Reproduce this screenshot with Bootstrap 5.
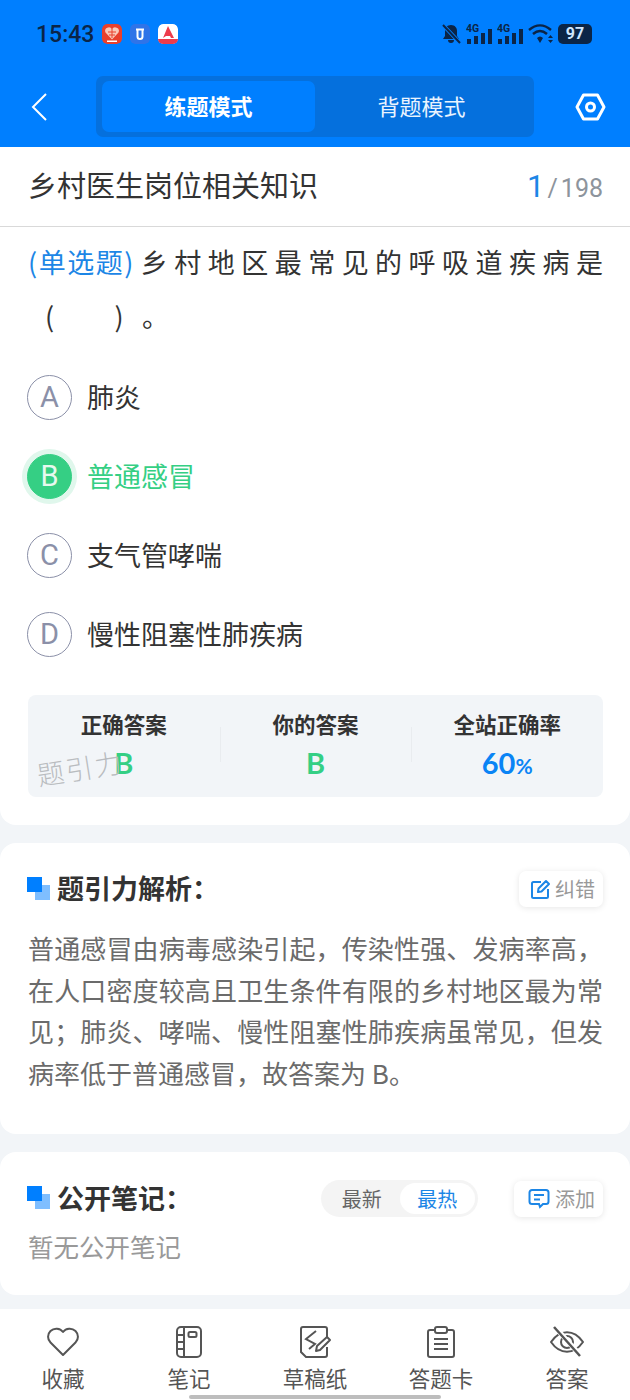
<!DOCTYPE html>
<html lang="zh-CN">
<head>
  <meta charset="UTF-8" />
  <meta name="viewport" content="width=device-width, initial-scale=1.0"/>
  <title>练题模式</title>
  <link href="https://cdn.jsdelivr.net/npm/bootstrap@5.3.3/dist/css/bootstrap.min.css" rel="stylesheet"/>
  <style>
    html, body { height: 1400px; overflow: hidden; }
    body {
      background-color: #f2f5f8;
      font-family: "Noto Sans CJK SC", "Noto Sans", sans-serif;
      color: #333;
    }
    .top-head { background-color: #007fff; height: 147px; }
    .status-row { height: 68px; padding: 0 36px; color: #0b2547; }
    .status-time { font: 500 23px/1 Roboto, sans-serif; }
    .app-ico { width: 20px; height: 20px; border-radius: 5px; display: block; }
    .batt-box { width: 34px; height: 20px; background: #0b2547; color: #cfe6ff; border-radius: 5px; font: 700 16px/1 Roboto, sans-serif; margin-right: 2px; }
    .nav-row { height: 79px; padding: 8px 24px 10px 30px; }
    .mode-switch { width: 438px; height: 61px; margin-left: 48px; margin-right: 41px; padding: 5px 6px; background-color: #0570dd; border-radius: 7px; }
    .mode-tab { flex: 1; color: #eaf4ff; font-size: 22px; border-radius: 7px; padding-bottom: 2px; }
    .mode-on { background-color: #007fff; color: #fff; font-weight: 700; }
    .title-row { height: 80px; background: #fff; border-bottom: 1px solid #d9d9d9; padding: 0 27px 0 28px; }
    .title-text { font-size: 29px; margin-bottom: 3px; }
    .page-now { font: 400 31px/1 Roboto, sans-serif; color: #1c86e6; }
    .page-all { font: 400 25px/1 Roboto, sans-serif; color: #8d949c; }
    .page-sep { margin: 0 3px; }
    .main-sheet { background: #fff; border-radius: 0 0 16px 16px; height: 598px; padding: 8px 27px 0 28px; position: relative; }
    .ques-line { font-size: 27px; line-height: 54px; gap: 6px; }
    .ques-tag { color: #1c86e6; letter-spacing: 1.500px; white-space: nowrap; }
    .ques-rest { flex: 1; text-align: justify; text-align-last: justify; }
    .ques-text2 { font-size: 27px; line-height: 54px; margin: 0; padding-left: 17px; white-space: pre; }
    .opt-list { margin-top: 32px; gap: 34px; }
    .opt-item { height: 45px; gap: 15px; font-size: 27px; margin-left: -1px; }
    .opt-mark { width: 45px; height: 45px; border-radius: 50%; border: 1px solid #8b90a8; color: #8b90a8; font: 400 29px/1 Roboto, sans-serif; }
    .opt-right { color: #35cf84; }
    .opt-right .opt-mark { background: #35cf84; border-color: #35cf84; color: #e6f9ef; box-shadow: 0 0 0 5px #e0f7ec; }
    .stat-box { margin-top: 38px; height: 102px; background: #f2f5f8; border-radius: 8px; padding-top: 15px; }
    .stat-col { flex: 1; text-align: center; position: relative; }
    .stat-col + .stat-col::before { content: ""; position: absolute; left: 0; top: 17px; height: 35px; border-left: 1px solid #e9ecef; }
    .stat-name { font-size: 21.500px; font-weight: 700; line-height: 28px; }
    .stat-val { font: 700 29px/38px Lato, sans-serif; margin-top: 6px; }
    .stat-pct { font-size: 21px; }
    .val-green { color: #35cf84; }
    .val-blue { color: #0a84f5; }
    .water-mark { position: absolute; left: 35px; top: 534px; color: #b9bcbf; font-size: 27px; letter-spacing: 2px; font-weight: 300; transform: rotate(-9deg); transform-origin: left top; line-height: 1; white-space: nowrap; }
    .info-card { background: #fff; border-radius: 16px; margin-top: 18px; padding: 28px 27px 0 28px; }
    .card-jx { height: 291px; }
    .card-bj { height: 143px; }
    .sec-title { font-size: 27px; font-weight: 700; line-height: 36px; gap: 7px; margin-top: -2px; margin-left: -1px; }
    .sec-ico { width: 23px; height: 23px; position: relative; display: block; flex: none; }
    .sec-ico::before { content: ""; position: absolute; right: 0; bottom: 0; width: 15px; height: 15px; background: #7fbeff; }
    .sec-ico::after { content: ""; position: absolute; left: 0; top: 0; width: 15px; height: 15px; background: #007fff; }
    .tool-btn { height: 36px; padding: 0 8px 0 11px; gap: 4px; background: #fff; border-radius: 7px; box-shadow: 0 1px 6px rgba(0, 0, 0, .1); color: #999; font-size: 20px; }
    .tool-add { padding-left: 14px; gap: 5px; }
    .info-text { font-size: 26px; line-height: 41.500px; color: #6b6b6b; margin: 20px 0 0; text-align: justify; }
    .sort-switch { height: 37px; background: #f4f4f4; border-radius: 19px; padding: 3px; width: 157px; margin-right: 36px; font-size: 20px; color: #666; }
    .sort-tab { flex: 1; border-radius: 16px; }
    .sort-on { background: #fff; color: #1c86e6; }
    .no-note { font-size: 25.500px; color: #999; line-height: 34px; margin-top: 12px; }
    .foot-bar { background: #fff; margin-top: 14px; height: 91px; position: relative; padding-top: 15px; }
    .foot-item { width: 126px; color: #555; font-size: 21.500px; line-height: 28px; gap: 4px; }
    .foot-item svg { width: 36px; height: 36px; display: block; }
    .home-line { position: absolute; left: 189px; bottom: 1px; width: 252px; height: 4px; background: #bdbdbd; border-radius: 2px; }
  </style>
</head>
<body>

<div class="top-head">
  <div class="status-row d-flex align-items-center justify-content-between">
    <div class="d-flex align-items-center gap-2">
      <span class="status-time">15:43</span>
      <svg class="app-ico" viewBox="0 0 20 20"><rect width="20" height="20" rx="5" fill="#e8402c"/><path d="M10 15.500 3.500 8.500a3.400 3.400 0 0 1 6.500-3 3.400 3.400 0 0 1 6.500 3z" fill="#f9c9b8"/><path d="M6 8h8M7 11h6M10 5v9" stroke="#e8402c"/><rect x="5" y="16.500" width="10" height="1.500" fill="#fff"/></svg>
      <svg class="app-ico" viewBox="0 0 20 20"><rect width="20" height="20" rx="5" fill="#2f74e8"/><path d="M6 5.500h8M7.500 5.500v7a2.500 2.500 0 0 0 5 0v-7" fill="none" stroke="#fff" stroke-width="2"/></svg>
      <svg class="app-ico" viewBox="0 0 20 20"><rect width="20" height="20" rx="5" fill="#fff"/><path d="M10 2 16 14h-3l-1-2H8l-3 2z" fill="#ee3b4b"/><rect y="15" width="20" height="5" fill="#ee3b4b"/></svg>
    </div>
    <div class="d-flex align-items-center gap-1">
      <svg width="22" height="22" viewBox="0 0 22 22"><path d="M11 2c4 0 6 3 6 6v5l2 3H3l2-3V8c0-3 2-6 6-6zM8 17h6a3 3 0 0 1-6 0z" fill="#0b2547"/><path d="M3 2 20 20" stroke="#007fff" stroke-width="4"/><path d="M3 2 20 20" stroke="#0b2547" stroke-width="2"/></svg>
      <svg width="27" height="22" viewBox="0 0 27 22"><text x="0" y="8.500" font-size="10.500" font-weight="700" font-family="Roboto" fill="#0b2547">4G</text><g fill="#0b2547"><rect x="1" y="16" width="4" height="5"/><rect x="8" y="13" width="4" height="8"/><rect x="15" y="10" width="4" height="11"/><rect x="22" y="6" width="4" height="15"/></g></svg>
      <svg width="27" height="22" viewBox="0 0 27 22"><text x="0" y="8.500" font-size="10.500" font-weight="700" font-family="Roboto" fill="#0b2547">4G</text><g fill="#0b2547"><rect x="1" y="16" width="4" height="5"/><rect x="8" y="13" width="4" height="8"/><rect x="15" y="10" width="4" height="11"/><rect x="22" y="6" width="4" height="15"/></g></svg>
      <svg width="26" height="22" viewBox="0 0 26 22"><g fill="none" stroke="#0b2547" stroke-width="2.400"><path d="M1 7c7-6 15-6 22 0"/><path d="M5 11c4.500-4 9.500-4 14 0"/></g><path d="M9 15c2-2 4-2 6 0l-3 5z" fill="#0b2547"/><path d="m20 15 2.500-3 2.500 3zm0 2h5l-2.500 3z" fill="#0b2547"/></svg>
      <span class="batt-box d-inline-flex align-items-center justify-content-center">97</span>
    </div>
  </div>
  <div class="nav-row d-flex align-items-center">
    <svg width="18" height="28" viewBox="0 0 18 28"><path d="M16 1 3 14l13 13" fill="none" stroke="#fff" stroke-width="2"/></svg>
    <div class="mode-switch d-flex flex-shrink-0">
      <div class="mode-tab mode-on d-flex align-items-center justify-content-center">练题模式</div>
      <div class="mode-tab d-flex align-items-center justify-content-center">背题模式</div>
    </div>
    <svg width="31" height="28" viewBox="0 0 31 28"><path d="M8.500 2h14l6.500 12-6.500 12h-14L2 14z" fill="none" stroke="#fff" stroke-width="3" stroke-linejoin="round"/><circle cx="15.500" cy="14" r="4" fill="none" stroke="#fff" stroke-width="3"/></svg>
  </div>
</div>

<div class="title-row d-flex align-items-center justify-content-between">
  <span class="title-text">乡村医生岗位相关知识</span>
  <span><span class="page-now">1</span><span class="page-all"><span class="page-sep">/</span>198</span></span>
</div>

<div class="main-sheet">
  <div class="ques-line d-flex">
    <span class="ques-tag">(单选题)</span>
    <span class="ques-rest">乡村地区最常见的呼吸道疾病是</span>
  </div>
  <p class="ques-text2">(          )   。</p>
  <div class="opt-list d-flex flex-column">
    <div class="opt-item d-flex align-items-center"><span class="opt-mark d-flex align-items-center justify-content-center">A</span>肺炎</div>
    <div class="opt-item opt-right d-flex align-items-center"><span class="opt-mark d-flex align-items-center justify-content-center">B</span>普通感冒</div>
    <div class="opt-item d-flex align-items-center"><span class="opt-mark d-flex align-items-center justify-content-center">C</span>支气管哮喘</div>
    <div class="opt-item d-flex align-items-center"><span class="opt-mark d-flex align-items-center justify-content-center">D</span>慢性阻塞性肺疾病</div>
  </div>
  <div class="stat-box d-flex">
    <div class="stat-col"><div class="stat-name">正确答案</div><div class="stat-val val-green">B</div></div>
    <div class="stat-col"><div class="stat-name">你的答案</div><div class="stat-val val-green">B</div></div>
    <div class="stat-col"><div class="stat-name">全站正确率</div><div class="stat-val val-blue">60<span class="stat-pct">%</span></div></div>
  </div>
  <div class="water-mark">题引力</div>
</div>

<div class="info-card card-jx">
  <div class="d-flex align-items-center justify-content-between">
    <div class="sec-title d-flex align-items-center"><span class="sec-ico"></span>题引力解析：</div>
    <div class="tool-btn d-flex align-items-center">
      <svg width="21" height="21" viewBox="0 0 21 21"><path d="M11 3H3.500A1.500 1.500 0 0 0 2 4.500v13A1.500 1.500 0 0 0 3.500 19h13a1.500 1.500 0 0 0 1.500-1.500V10" fill="none" stroke="#1c86e6" stroke-width="2"/><path d="m8 13 .5-3.500L16 2l3 3-7.500 7.500z" fill="none" stroke="#1c86e6" stroke-width="2" stroke-linejoin="round"/></svg>
      纠错
    </div>
  </div>
  <p class="info-text">普通感冒由病毒感染引起，传染性强、发病率高，在人口密度较高且卫生条件有限的乡村地区最为常见；肺炎、哮喘、慢性阻塞性肺疾病虽常见，但发病率低于普通感冒，故答案为 B。</p>
</div>

<div class="info-card card-bj">
  <div class="d-flex align-items-center justify-content-between">
    <div class="sec-title d-flex align-items-center"><span class="sec-ico"></span>公开笔记：</div>
    <div class="d-flex align-items-center ms-auto">
      <div class="sort-switch d-flex">
        <div class="sort-tab d-flex align-items-center justify-content-center">最新</div>
        <div class="sort-tab sort-on d-flex align-items-center justify-content-center">最热</div>
      </div>
      <div class="tool-btn tool-add d-flex align-items-center">
        <svg width="22" height="21" viewBox="0 0 22 21"><path d="M4 2h14a2.500 2.500 0 0 1 2.500 2.500v9A2.500 2.500 0 0 1 18 16h-3l-3 3-1-3H4a2.500 2.500 0 0 1-2.500-2.500v-9A2.500 2.500 0 0 1 4 2z" fill="none" stroke="#1c86e6" stroke-width="2"/><path d="M6 7h10M6 11.500h6" stroke="#1c86e6" stroke-width="2"/></svg>
        添加
      </div>
    </div>
  </div>
  <div class="no-note">暂无公开笔记</div>
</div>

<div class="foot-bar d-flex">
  <div class="foot-item d-flex flex-column align-items-center">
    <svg viewBox="0 0 36 36"><path d="M18 31 5.500 18.500a8 8 0 0 1 0-11.500 8.500 8.500 0 0 1 12.500 1 8.500 8.500 0 0 1 12.500-1 8 8 0 0 1 0 11.500z" fill="none" stroke="#555" stroke-width="2" stroke-linejoin="round"/></svg>
    收藏
  </div>
  <div class="foot-item d-flex flex-column align-items-center">
    <svg viewBox="0 0 36 36"><rect x="6" y="3" width="24" height="30" rx="4" fill="none" stroke="#555" stroke-width="2"/><path d="M13 3v30M6 11h7M6 18h7M6 25h7" stroke="#555" stroke-width="2"/><rect x="17.500" y="8" width="8" height="5" rx="1.500" fill="none" stroke="#555" stroke-width="2"/></svg>
    笔记
  </div>
  <div class="foot-item d-flex flex-column align-items-center">
    <svg viewBox="0 0 36 36"><path d="M30 13V5a2 2 0 0 0-2-2H6a2 2 0 0 0-2 2v23l5 5h19a2 2 0 0 0 2-2v-8" fill="none" stroke="#555" stroke-width="2"/><path d="M19 7 9 15l9 5-6 5" fill="none" stroke="#555" stroke-width="2"/><path d="m19 27 1-5 10-9 3 3-10 10z" fill="#fff" stroke="#555" stroke-width="2" stroke-linejoin="round"/></svg>
    草稿纸
  </div>
  <div class="foot-item d-flex flex-column align-items-center">
    <svg viewBox="0 0 36 36"><path d="M11 6H7a2 2 0 0 0-2 2v23a2 2 0 0 0 2 2h22a2 2 0 0 0 2-2V8a2 2 0 0 0-2-2h-4" fill="none" stroke="#555" stroke-width="2"/><rect x="12" y="3" width="12" height="6" rx="2" fill="none" stroke="#555" stroke-width="2"/><path d="M11 15h14M11 20h14M11 25h14" stroke="#555" stroke-width="2"/></svg>
    答题卡
  </div>
  <div class="foot-item d-flex flex-column align-items-center">
    <svg viewBox="0 0 36 36"><path d="M2 18c9-13 23-13 32 0-9 13-23 13-32 0z" fill="none" stroke="#555" stroke-width="2" stroke-linejoin="round"/><circle cx="18" cy="18" r="6" fill="none" stroke="#555" stroke-width="2"/><path d="M5 2 32 32" stroke="#fff" stroke-width="5"/><path d="M5 3 31 32" stroke="#555" stroke-width="2.500"/></svg>
    答案
  </div>
  <div class="home-line"></div>
</div>

<script src="https://cdn.jsdelivr.net/npm/bootstrap@5.3.3/dist/js/bootstrap.bundle.min.js"></script>
</body>
</html>
